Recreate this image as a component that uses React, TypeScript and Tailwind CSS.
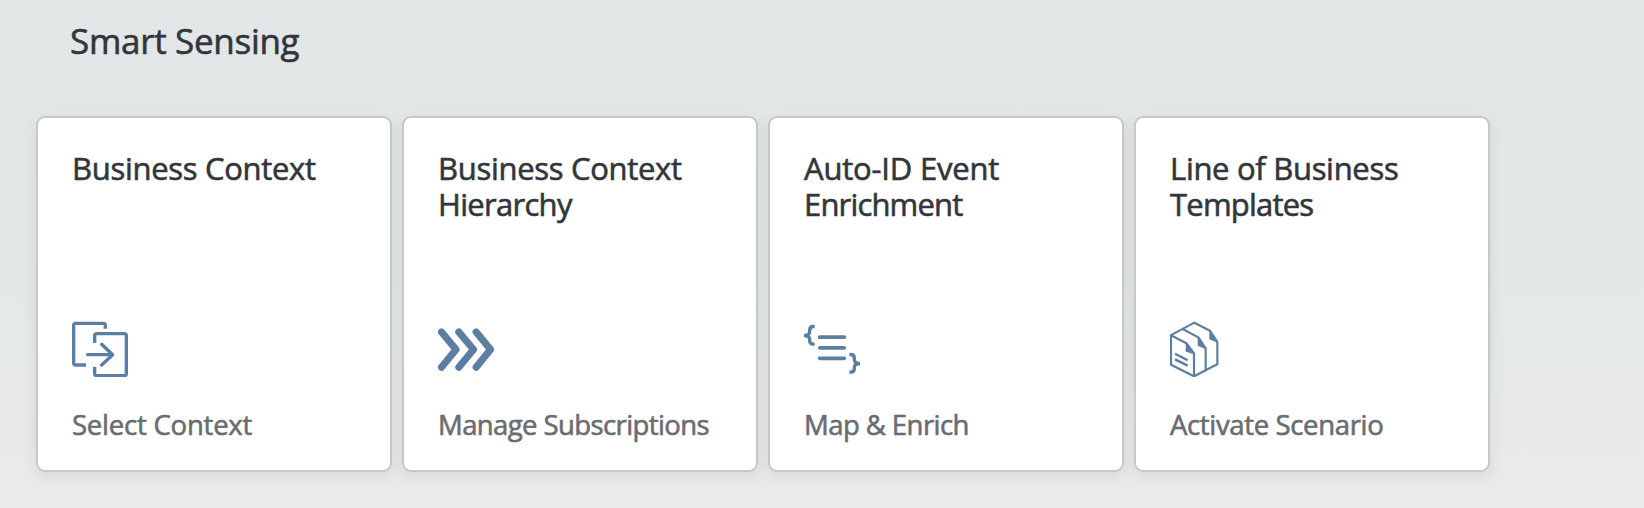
import type { ReactNode } from "react";

interface Tile {
  title: string[];
  titleClass: string[];
  subtitle: string;
  subtitleClass: string;
  icon: ReactNode;
}

const iconClass = "block h-14 w-14 text-[#5b7fa3]";

function SelectIcon() {
  return (
    <svg viewBox="36 33 168 168" className={iconClass} fill="none" stroke="currentColor" strokeWidth="10">
      <path d="M136 56V46q0-6-6-6H47q-6 0-6 6v113q0 6 6 6h31" />
      <path d="M104 99V77q0-6 6-6h83q6 0 6 6v114q0 6-6 6h-83q-6 0-6-6v-20" />
      <path d="M83 134h74M125 103l33 31-33 31" strokeLinecap="round" strokeLinejoin="round" />
    </svg>
  );
}

function ChevronsIcon() {
  return (
    <svg viewBox="39 33 168 168" className={iconClass} fill="none" stroke="currentColor" strokeWidth="21.500" strokeLinecap="round" strokeLinejoin="round">
      <path d="M49.500 66l43.500 52.500-43.500 53M101.500 66l44 52.500-44 53M153.500 66l43 52.500-43 53" />
    </svg>
  );
}

function MappingIcon() {
  return (
    <svg viewBox="42 33 168 168" className={iconClass} fill="none" stroke="currentColor">
      <path d="M89 81.500h74M89 113.500h74M89 145h74" strokeWidth="11" strokeLinecap="round" />
      <path d="M74 49.500h-4q-11 0-11 11v4q0 12-17 12q17 0 17 12v4q0 10 11 10h4" strokeWidth="10" />
      <path d="M178 133.500h4q11 0 11 11v4q0 12 17 12q-17 0-17 12v4q0 10-11 10h-4" strokeWidth="10" />
    </svg>
  );
}

function TemplatesIcon() {
  return (
    <svg viewBox="45 33 168 168" className={iconClass} fill="none" stroke="currentColor" strokeWidth="6.500" strokeLinejoin="round">
      <path d="M48 75.500l70-37.500 47 24.500 22 33V163l-70 36-69-35z" />
      <path d="M48 75.500l46 24 23 31V199" />
      <path d="M83 57l47 25 22 33v66" />
      <path d="M94 99.500V123l23 8zM130 82v24l22 9zM165 62.500V87l22 9z" fill="currentColor" strokeWidth="4" />
      <path d="M60 131l38 20M60 148l38 19" strokeWidth="7" />
    </svg>
  );
}

const tiles: Tile[] = [
  {
    title: ["Business Context"],
    titleClass: ["tracking-[-0.3px]"],
    subtitle: "Select Context",
    subtitleClass: "tracking-[-0.22px]",
    icon: <SelectIcon />,
  },
  {
    title: ["Business Context", "Hierarchy"],
    titleClass: ["tracking-[-0.3px]", "tracking-[-0.7px]"],
    subtitle: "Manage Subscriptions",
    subtitleClass: "tracking-[-0.6px]",
    icon: <ChevronsIcon />,
  },
  {
    title: ["Auto-ID Event", "Enrichment"],
    titleClass: ["tracking-[-0.2px]", "tracking-[-0.83px]"],
    subtitle: "Map & Enrich",
    subtitleClass: "tracking-[-0.55px]",
    icon: <MappingIcon />,
  },
  {
    title: ["Line of Business", "Templates"],
    titleClass: ["tracking-[-0.3px]", "tracking-[-0.8px]"],
    subtitle: "Activate Scenario",
    subtitleClass: "tracking-[-0.35px]",
    icon: <TemplatesIcon />,
  },
];

function TileCard({ tile }: { tile: Tile }) {
  return (
    <article className="flex h-[356px] w-[356px] shrink-0 flex-col rounded-[9px] border-2 border-[#c5c9ca] bg-white pt-[32px] pl-[34px] whitespace-nowrap shadow-[0_4px_16px_rgba(0,0,0,0.08)]">
      <h2 className="h-[171px] text-[31px] leading-[36px] text-[#32363a] [-webkit-text-stroke:0.6px_#32363a]">
        {tile.title.map((line, i) => (
          <span key={line} className={`block ${tile.titleClass[i]}`}>
            {line}
          </span>
        ))}
      </h2>
      {tile.icon}
      <p className={`mt-[30px] text-[27.5px] leading-[36px] text-[#6a6d70] [-webkit-text-stroke:0.6px_#6a6d70] ${tile.subtitleClass}`}>
        {tile.subtitle}
      </p>
    </article>
  );
}

export default function App() {
  return (
    <main className="h-[508px] w-full overflow-hidden bg-linear-to-b from-[#e2e6e7] to-[#e8eaeb] font-['Open_Sans',sans-serif]">
      <header className="h-[116px] pt-[17px] pl-[70px]">
        <h1 className="text-[35px] leading-[48px] tracking-[-0.3px] text-[#32363a] [-webkit-text-stroke:0.6px_#32363a]">
          Smart Sensing
        </h1>
      </header>
      <section className="flex gap-[10px] pl-9">
        {tiles.map((tile) => (
          <TileCard key={tile.subtitle} tile={tile} />
        ))}
      </section>
    </main>
  );
}
